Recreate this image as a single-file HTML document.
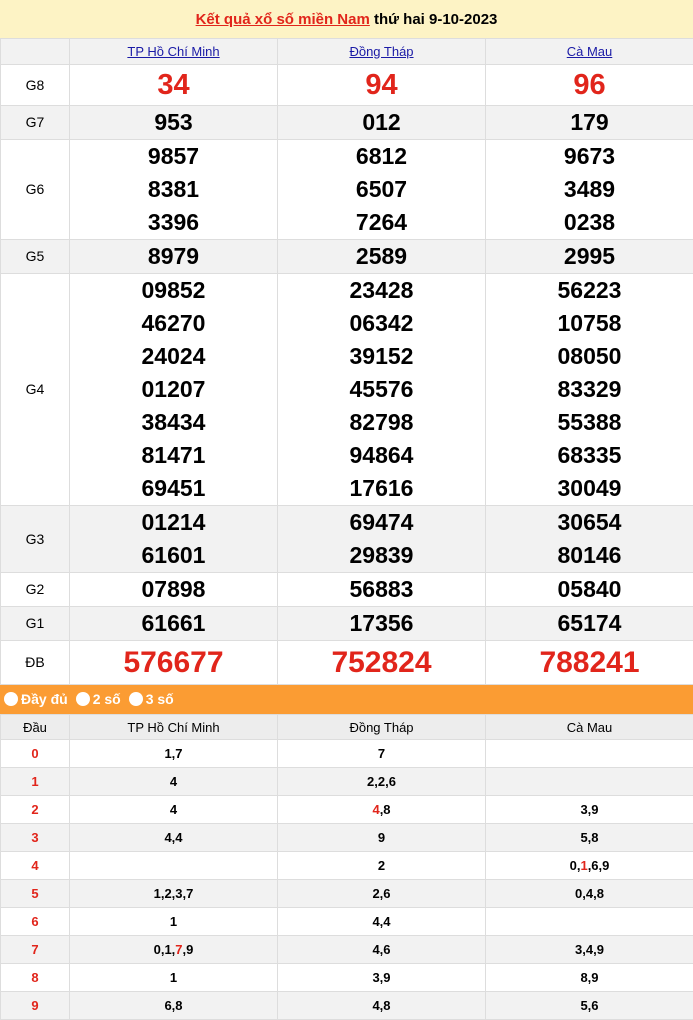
<!DOCTYPE html>
<html><head><meta charset="utf-8"><style>
*{margin:0;padding:0;box-sizing:border-box}
body{width:693px;height:1019px;overflow:hidden;background:#fff;font-family:"Liberation Sans",Arial,sans-serif;color:#000}
.title{height:38px;background:#fdf3c5;text-align:center;line-height:40px;font-size:15px;font-weight:bold}
.title a{color:#e1251b;text-decoration:underline}
table{border-collapse:collapse;width:693px;table-layout:fixed}
td,th{border:1px solid #ddd;text-align:center;vertical-align:middle}
.k td{font-size:23px;font-weight:bold;line-height:33px}
.k td.l{font-size:14px;font-weight:normal}
.k .hd td{height:26px;background:#f2f2f2;font-size:13px;font-weight:normal;line-height:16px}
.hd a{color:#1a1aa6;text-decoration:underline}
.g{background:#f2f2f2}
.r{color:#e1251b}
.k td.g8{font-size:29px;color:#e1251b}
.k td.db{font-size:30px;color:#e1251b}
.bar{height:29px;background:#fb9c33;color:#fff;font-weight:bold;font-size:14px;line-height:29px;padding-left:4px}
.bar span{display:inline-block;width:14px;height:14px;background:#fff;border-radius:50%;vertical-align:-2px;margin-right:3px}
.bar b{margin-right:8px}
.t td{height:28px;font-size:13px;font-weight:bold}
.t .h td{height:25px;font-weight:normal;background:#ededed}
.t td.r{color:#e1251b}
</style></head><body>
<div class="title"><a>Kết quả xổ số miền Nam</a> thứ hai 9-10-2023</div>
<table class="k">
<colgroup><col style="width:69px"><col style="width:208px"><col style="width:208px"><col style="width:208px"></colgroup>
<tr class="hd"><td class="g"></td><td class="g"><a>TP Hồ Chí Minh</a></td><td class="g"><a>Đồng Tháp</a></td><td class="g"><a>Cà Mau</a></td></tr>
<tr style="height:41px"><td class="l">G8</td><td class="g8">34</td><td class="g8">94</td><td class="g8">96</td></tr>
<tr class="g" style="height:34px"><td class="l">G7</td><td>953</td><td>012</td><td>179</td></tr>
<tr style="height:100px"><td class="l">G6</td><td>9857<br>8381<br>3396</td><td>6812<br>6507<br>7264</td><td>9673<br>3489<br>0238</td></tr>
<tr class="g" style="height:34px"><td class="l">G5</td><td>8979</td><td>2589</td><td>2995</td></tr>
<tr style="height:232px"><td class="l">G4</td><td>09852<br>46270<br>24024<br>01207<br>38434<br>81471<br>69451</td><td>23428<br>06342<br>39152<br>45576<br>82798<br>94864<br>17616</td><td>56223<br>10758<br>08050<br>83329<br>55388<br>68335<br>30049</td></tr>
<tr class="g" style="height:67px"><td class="l">G3</td><td>01214<br>61601</td><td>69474<br>29839</td><td>30654<br>80146</td></tr>
<tr style="height:34px"><td class="l">G2</td><td>07898</td><td>56883</td><td>05840</td></tr>
<tr class="g" style="height:34px"><td class="l">G1</td><td>61661</td><td>17356</td><td>65174</td></tr>
<tr style="height:44px"><td class="l">ĐB</td><td class="db">576677</td><td class="db">752824</td><td class="db">788241</td></tr>
</table>
<div class="bar"><span></span><b>Đầy đủ</b><span></span><b>2 số</b><span></span><b>3 số</b></div>
<table class="t">
<colgroup><col style="width:69px"><col style="width:208px"><col style="width:208px"><col style="width:208px"></colgroup>
<tr class="h"><td>Đầu</td><td>TP Hồ Chí Minh</td><td>Đồng Tháp</td><td>Cà Mau</td></tr>
<tr><td class="r">0</td><td>1,7</td><td>7</td><td></td></tr>
<tr class="g"><td class="r">1</td><td>4</td><td>2,2,6</td><td></td></tr>
<tr><td class="r">2</td><td>4</td><td><span class="r">4</span>,8</td><td>3,9</td></tr>
<tr class="g"><td class="r">3</td><td>4,4</td><td>9</td><td>5,8</td></tr>
<tr><td class="r">4</td><td></td><td>2</td><td>0,<span class="r">1</span>,6,9</td></tr>
<tr class="g"><td class="r">5</td><td>1,2,3,7</td><td>2,6</td><td>0,4,8</td></tr>
<tr><td class="r">6</td><td>1</td><td>4,4</td><td></td></tr>
<tr class="g"><td class="r">7</td><td>0,1,<span class="r">7</span>,9</td><td>4,6</td><td>3,4,9</td></tr>
<tr><td class="r">8</td><td>1</td><td>3,9</td><td>8,9</td></tr>
<tr class="g"><td class="r">9</td><td>6,8</td><td>4,8</td><td>5,6</td></tr>
</table>
</body></html>
